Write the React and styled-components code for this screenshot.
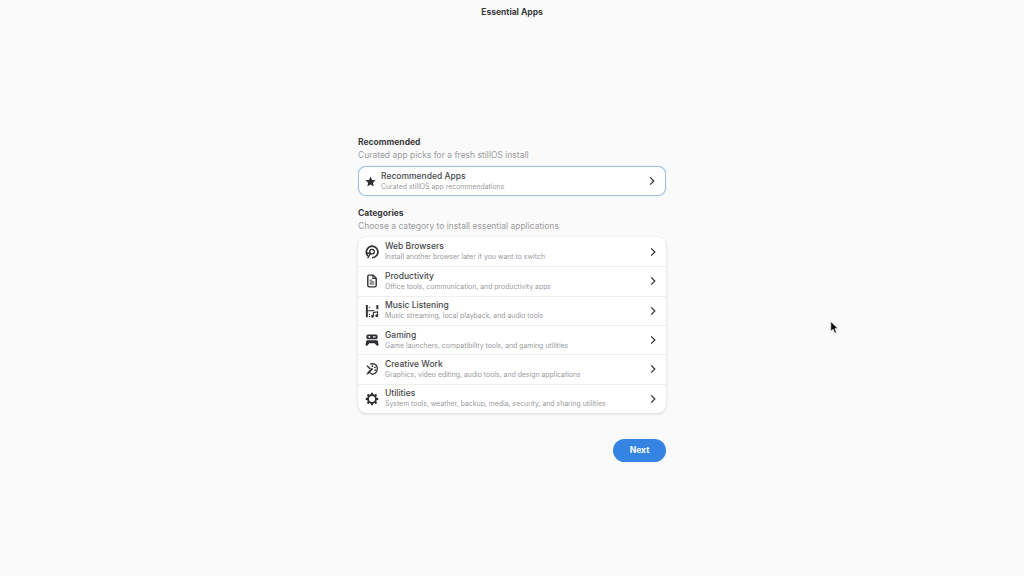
import styled, { createGlobalStyle } from "styled-components";

const GlobalStyle = createGlobalStyle`
  html, body {
    margin: 0;
    padding: 0;
    background: #fafafa;
  }
  body {
    font-family: Inter, "Noto Sans", sans-serif;
  }
`;

const Page = styled.div`
  position: relative;
  width: 1024px;
  height: 576px;
  overflow: hidden;
  background: #fafafa;
  display: flex;
  flex-direction: column;
  align-items: center;
`;

const HeaderBar = styled.div`
  height: 24px;
  width: 100%;
  display: flex;
  align-items: center;
  justify-content: center;
  font-size: 8.5px;
  font-weight: 700;
  color: #3a3a3e;
`;

const Column = styled.div`
  width: 308px;
  margin-top: 112px;
  display: flex;
  flex-direction: column;
`;

const SectionTitle = styled.div`
  font-size: 8.5px;
  line-height: 12px;
  font-weight: 700;
  color: #3a3a3e;
`;

const SectionSub = styled.div`
  font-size: 8.5px;
  line-height: 12px;
  margin-top: 1px;
  margin-bottom: 5px;
  color: #9a9a9e;
`;

const FocusCard = styled.div`
  height: 28px;
  box-sizing: content-box;
  display: flex;
  align-items: center;
  background: #fff;
  border-radius: 8px;
  border: 1px solid #9cc0e8;
  margin-bottom: 11px;
  padding: 0 8px 0 6px;
  box-shadow: 0 0 1px rgba(53, 132, 228, 0.4);
`;

const ListCard = styled.div`
  background: #fff;
  border-radius: 8px;
  box-shadow: 0 1px 3px rgba(0, 0, 0, 0.14), 0 0 1px rgba(0, 0, 0, 0.1);
  display: flex;
  flex-direction: column;
`;

const Row = styled.div`
  height: 29.33px;
  box-sizing: border-box;
  display: flex;
  align-items: center;
  padding: 0 8px 0 7px;
  & + & {
    border-top: 1px solid #efefef;
  }
`;

const IconSlot = styled.div`
  width: ${(p) => p.$size}px;
  height: ${(p) => p.$size}px;
  margin-right: ${(p) => p.$gap}px;
  flex: none;
  color: #2e2e32;
  display: flex;
  align-items: center;
  justify-content: center;
`;

const RowText = styled.div`
  flex: 1;
  min-width: 0;
  display: flex;
  flex-direction: column;
`;

const RowTitle = styled.div`
  font-size: 8.5px;
  line-height: 11px;
  color: #47474b;
  font-weight: 500;
`;

const RowSub = styled.div`
  font-size: 6.9px;
  line-height: 10px;
  color: #9a9a9e;
`;

const Chevron = styled.svg`
  width: 10px;
  height: 10px;
  flex: none;
  color: #3a3a3e;
`;

const Footer = styled.div`
  display: flex;
  justify-content: flex-end;
  margin-top: 26px;
`;

const NextButton = styled.button`
  width: 53px;
  height: 23px;
  border: none;
  border-radius: 12px;
  background: #3584e4;
  color: #fff;
  font-family: inherit;
  font-size: 8.5px;
  font-weight: 700;
  padding: 0;
`;

const Cursor = styled.svg`
  position: absolute;
  left: 830px;
  top: 321px;
  width: 9px;
  height: 13px;
`;

const ChevronIcon = () => (
  <Chevron viewBox="0 0 10 10" fill="none">
    <path d="M3.2 1.4 6.8 5 3.2 8.6" stroke="currentColor" strokeWidth="1.3" />
  </Chevron>
);

const StarIcon = () => (
  <svg width="11" height="11" viewBox="0 0 16 16" fill="currentColor">
    <path d="M8 .8l2.2 4.9 5.3.6-4 3.6 1.1 5.3L8 12.5l-4.6 2.7 1.1-5.3-4-3.6 5.3-.6z" />
  </svg>
);

const BrowserIcon = () => (
  <svg width="14" height="14" viewBox="0 0 16 16" fill="none" stroke="currentColor">
    <path d="M3.4 12.6A6.6 6.6 0 1 1 8 14.6" strokeWidth="1.9" />
    <circle cx="8" cy="7.6" r="2.6" strokeWidth="1.5" />
    <path d="M6.8 9 3 15M6.2 9.4l-3.9-.2" strokeWidth="1.6" />
  </svg>
);

const ProductivityIcon = () => (
  <svg width="14" height="14" viewBox="0 0 16 16" fill="none" stroke="currentColor">
    <path d="M3.2 2.8c0-.9.6-1.5 1.5-1.5h4.6l3.5 3.6v8.3c0 .9-.6 1.5-1.5 1.5H4.7c-.9 0-1.5-.6-1.5-1.5z" strokeWidth="1.6" />
    <path d="M5.4 7h2.8M5.4 9.2h5.2M5.4 11.4h5.2" strokeWidth="1.1" />
    <path d="M9 1.6v3.6h3.6" strokeWidth="1.2" />
  </svg>
);

const MusicIcon = () => (
  <svg width="14" height="14" viewBox="0 0 16 16" fill="currentColor">
    <path d="M1 1h2.2v14H1zM13 1h2.2v5H13zM3 7h8v1.4H3z" />
    <path d="M4.4 3h1.4v1.4H4.4zM4.4 11h1.4v1.4H4.4zM4.4 13.4h1.4v1.4H4.4z" />
    <path d="M9 9.2l6-1v5.2a1.6 1.6 0 1 1-1.2-1.5V9.8l-3.6.6v3.6a1.6 1.6 0 1 1-1.2-1.5z" />
  </svg>
);

const GamingIcon = () => (
  <svg width="14" height="14" viewBox="0 0 16 16" fill="currentColor">
    <path fillRule="evenodd" d="M3.6 1.6h8.8c1.1 0 2 .9 2 2v1.6c0 1.1-.9 2-2 2H3.6c-1.1 0-2-.9-2-2V3.6c0-1.1.9-2 2-2zM4 3.4v2h2v-2zm5 .4v1.2h3V3.8z" />
    <path d="M3 8.2h10c1 0 1.6.6 1.8 1.6l.6 3.2c.2 1.3-1.4 2-2.3 1l-2-2.2H5l-2 2.2c-.9 1-2.5.3-2.3-1l.6-3.2C1.5 8.8 2 8.2 3 8.2z" />
  </svg>
);

const CreativeIcon = () => (
  <svg width="14" height="14" viewBox="0 0 16 16" fill="none" stroke="currentColor">
    <path d="M6 2.6c3-1.6 7.4.2 8 3.6.5 3-1 6.6-4 7.4-2 .5-4.4-.6-5-2.6" strokeWidth="1.5" />
    <circle cx="8.4" cy="4.8" r="1" fill="currentColor" stroke="none" />
    <circle cx="11.4" cy="6" r="1" fill="currentColor" stroke="none" />
    <circle cx="11.6" cy="9.2" r="1" fill="currentColor" stroke="none" />
    <path d="M8.6 7.2 3.4 12.6" strokeWidth="2" />
    <path d="M3.4 11.6 1 15l3.6-1.8z" fill="currentColor" stroke="none" />
    <path d="M2.4 4.4 6 8" strokeWidth="1.6" />
  </svg>
);

const UtilitiesIcon = () => (
  <svg width="14" height="14" viewBox="0 0 16 16" fill="none" stroke="currentColor">
    <circle cx="8" cy="8" r="4.6" strokeWidth="2.2" />
    <path d="M8 .8v2.6M8 12.6v2.6M.8 8h2.6M12.6 8h2.6M2.9 2.9l1.9 1.9M11.2 11.2l1.9 1.9M2.9 13.1l1.9-1.9M11.2 4.8l1.9-1.9" strokeWidth="2.2" />
  </svg>
);

const categories = [
  { title: "Web Browsers", sub: "Install another browser later if you want to switch", icon: <BrowserIcon /> },
  { title: "Productivity", sub: "Office tools, communication, and productivity apps", icon: <ProductivityIcon /> },
  { title: "Music Listening", sub: "Music streaming, local playback, and audio tools", icon: <MusicIcon /> },
  { title: "Gaming", sub: "Game launchers, compatibility tools, and gaming utilities", icon: <GamingIcon /> },
  { title: "Creative Work", sub: "Graphics, video editing, audio tools, and design applications", icon: <CreativeIcon /> },
  { title: "Utilities", sub: "System tools, weather, backup, media, security, and sharing utilities", icon: <UtilitiesIcon /> },
];

const App = () => {
  return (
    <Page>
      <GlobalStyle />
      <HeaderBar>Essential Apps</HeaderBar>
      <Column>
        <SectionTitle>Recommended</SectionTitle>
        <SectionSub>Curated app picks for a fresh stillOS install</SectionSub>
        <FocusCard>
          <IconSlot $size={11} $gap={5}>
            <StarIcon />
          </IconSlot>
          <RowText>
            <RowTitle>Recommended Apps</RowTitle>
            <RowSub>Curated stillOS app recommendations</RowSub>
          </RowText>
          <ChevronIcon />
        </FocusCard>
        <SectionTitle>Categories</SectionTitle>
        <SectionSub>Choose a category to install essential applications</SectionSub>
        <ListCard>
          {categories.map((c) => (
            <Row key={c.title}>
              <IconSlot $size={14} $gap={6}>
                {c.icon}
              </IconSlot>
              <RowText>
                <RowTitle>{c.title}</RowTitle>
                <RowSub>{c.sub}</RowSub>
              </RowText>
              <ChevronIcon />
            </Row>
          ))}
        </ListCard>
        <Footer>
          <NextButton>Next</NextButton>
        </Footer>
      </Column>
      <Cursor viewBox="0 0 9 13">
        <path d="M.8.6v9.6l2.3-2 1.6 3.9 1.7-.7L4.8 7.6h3z" fill="#111" stroke="#fff" strokeWidth=".5" />
      </Cursor>
    </Page>
  );
};

export default App;
